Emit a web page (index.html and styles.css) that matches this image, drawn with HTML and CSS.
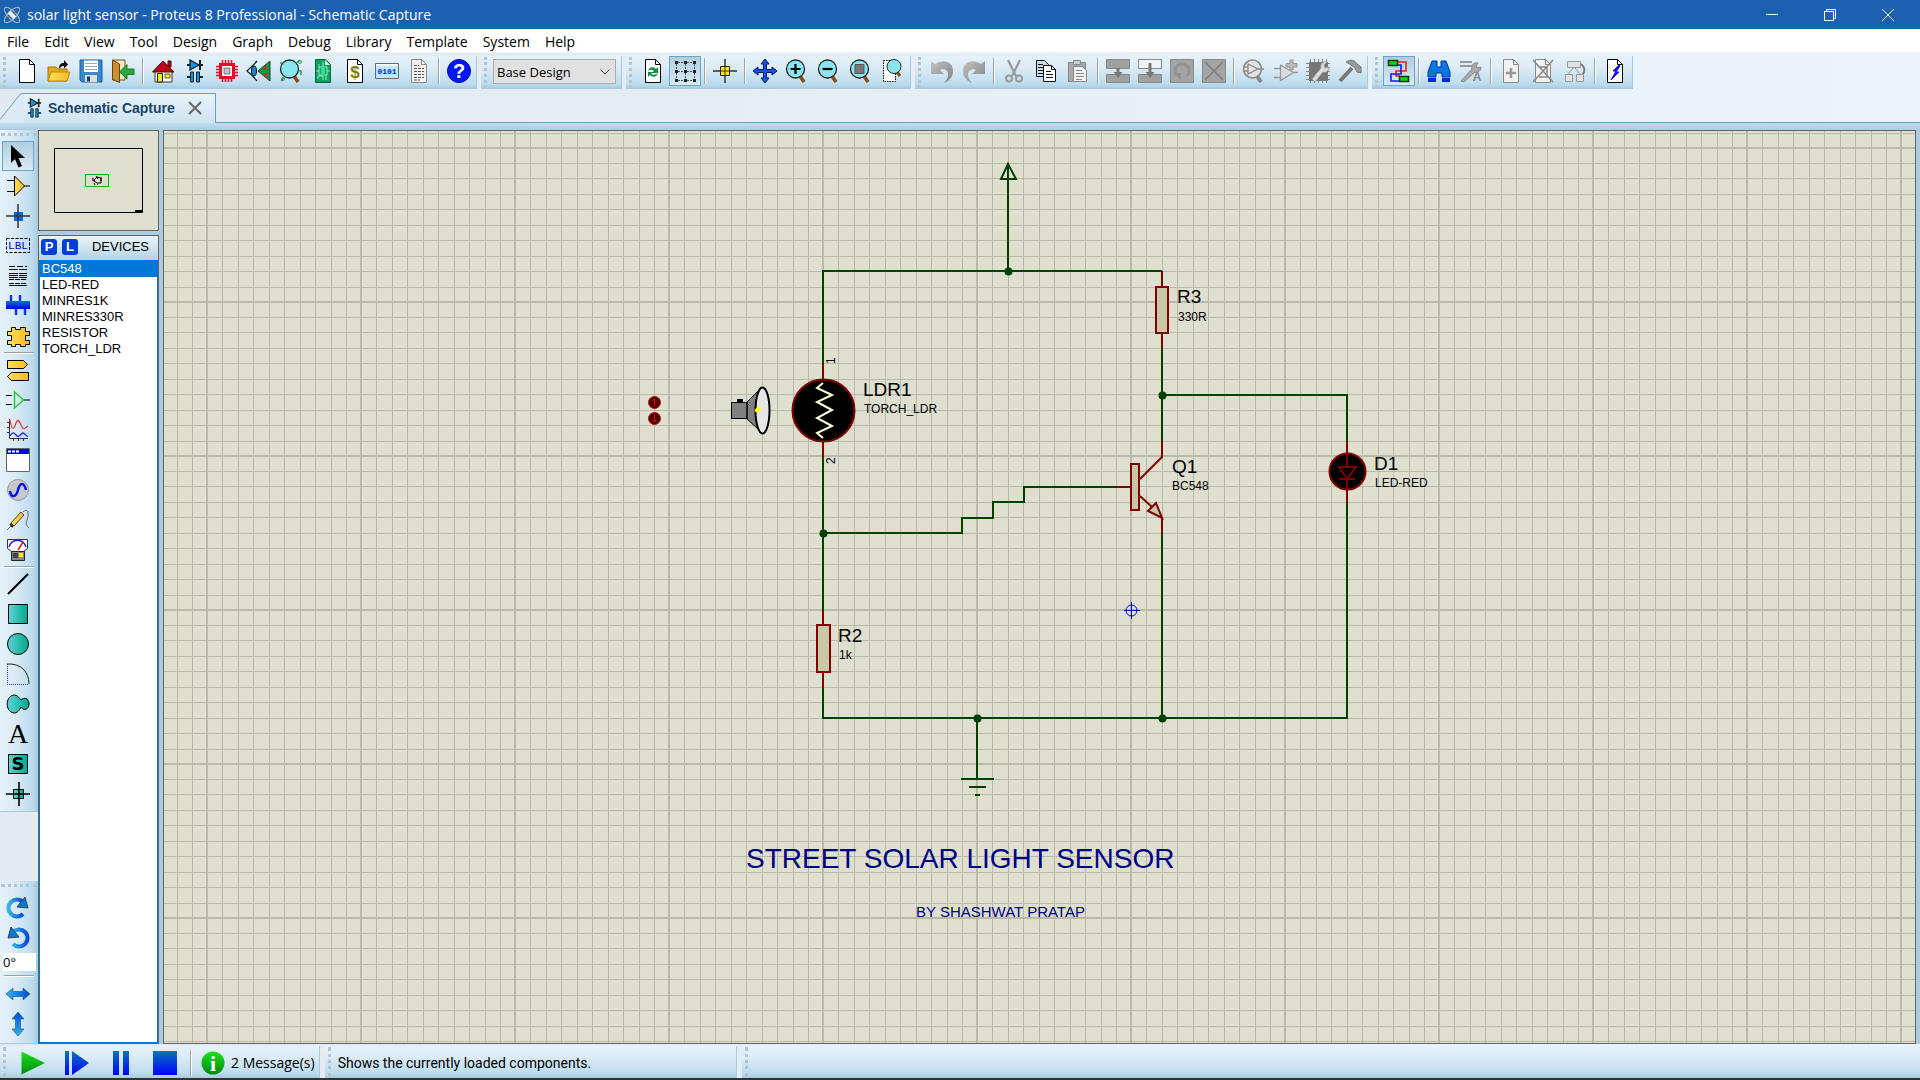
FILE: index.html
```html
<!DOCTYPE html>
<html lang="en">
<head>
<meta charset="utf-8">
<title>solar light sensor - Proteus 8 Professional - Schematic Capture</title>
<link rel="stylesheet" href="styles.css">
</head>
<body>
<svg class="defs" width="0" height="0" aria-hidden="true">
  <defs>
    <linearGradient id="gold" x1="0" x2="1"><stop offset="0" stop-color="#ffe05a"/><stop offset="1" stop-color="#fcb81e"/></linearGradient>
    <linearGradient id="teal" x1="0" x2="1"><stop offset="0" stop-color="#5fd3d8"/><stop offset="1" stop-color="#00a98c"/></linearGradient>
    <linearGradient id="blueV" x1="0" x2="0" y1="0" y2="1"><stop offset="0" stop-color="#0a74b8"/><stop offset="1" stop-color="#0000ff"/></linearGradient>
    <linearGradient id="blueH" x1="0" x2="1"><stop offset="0" stop-color="#35b5e5"/><stop offset="1" stop-color="#0048e0"/></linearGradient>
    <linearGradient id="blueT" x1="0" x2="0" y1="0" y2="1"><stop offset="0" stop-color="#0048e0"/><stop offset="1" stop-color="#35b5e5"/></linearGradient>
    <linearGradient id="greenV" x1="0" x2="0" y1="0" y2="1"><stop offset="0" stop-color="#1ee01e"/><stop offset="1" stop-color="#008a10"/></linearGradient>
    <linearGradient id="greyV" x1="0" x2="1" y1="0" y2="1"><stop offset="0" stop-color="#c2c2c2"/><stop offset="1" stop-color="#828282"/></linearGradient>
    <symbol id="page" viewBox="0 0 24 24"><path d="M4.500 .5h10l5 5v18h-15z" fill="#fff" stroke="#000"/><path d="M14.500 .5v5h5" fill="none" stroke="#000"/></symbol>
    <symbol id="page-grey" viewBox="0 0 24 24"><path d="M4.500 .5h10l5 5v18h-15z" fill="#f2f2f2" stroke="#888"/><path d="M14.500 .5v5h5" fill="none" stroke="#888"/></symbol>
    <symbol id="lens" viewBox="0 0 24 24"><path d="M15 17l4 6" stroke="#8a4a10" stroke-width="3.500"/><circle cx="10.500" cy="10" r="9" fill="#8ae6ee" stroke="#222" stroke-width="1.300"/></symbol>
    <symbol id="parts" viewBox="0 0 24 24"><g stroke="#122" stroke-width="2"><path d="M4 6h16M17 1v10M4 18h4M16 18h4"/><path d="M7 1l9 5-9 5z" fill="#1890e8" stroke-width="1.300"/></g><path d="M7.500 13h3v10h-3zM13.500 13h3v10h-3z" fill="#1890e8" stroke="#122"/></symbol>
    <symbol id="cross" viewBox="0 0 24 24"><path d="M12 0v24M0 12h24" stroke="#333" stroke-width="1.500"/></symbol>
    <pattern id="grid" width="154" height="154" patternUnits="userSpaceOnUse" x="42" y="16">
      <path d="M0 1h154M1 0v154" stroke="#b9b9aa" stroke-width="2"/>
      <path d="M16.500 0v154M32.500 0v154M47.500 0v154M63.500 0v154M78.500 0v154M94.500 0v154M109.500 0v154M125.500 0v154M140.500 0v154M0 16.500h154M0 31.500h154M0 47.500h154M0 62.500h154M0 78.500h154M0 93.500h154M0 109.500h154M0 124.500h154M0 140.500h154" stroke="#b9b9aa"/>
    </pattern>
  </defs>
</svg>

<header class="titlebar">
  <svg class="app-icon" viewBox="0 0 20 20" fill="none" stroke="#a9b9c9"><ellipse cx="10" cy="10" rx="10" ry="4" transform="rotate(45 10 10)"/><ellipse cx="10" cy="10" rx="10" ry="4" transform="rotate(-45 10 10)"/><path d="M4 7l12 7M4 14l12-8" stroke="#667"/><path d="M7 7l6 6" stroke="#eee" stroke-width="4"/></svg>
  <span class="app-title">solar light sensor - Proteus 8 Professional - Schematic Capture</span>
  <div class="window-buttons">
    <button aria-label="Minimize"><svg viewBox="0 0 12 12"><path d="M0 5.500h12"/></svg></button>
    <button aria-label="Restore"><svg viewBox="0 0 12 12"><path d="M.5 2.500h9v9h-9zM2.500 2V.5h9v9H10"/></svg></button>
    <button aria-label="Close window"><svg viewBox="0 0 12 12"><path d="M0 0l12 12M12 0L0 12"/></svg></button>
  </div>
</header>

<nav class="menubar">
  <a href="#">File</a><a href="#">Edit</a><a href="#">View</a><a href="#">Tool</a><a href="#">Design</a><a href="#">Graph</a><a href="#">Debug</a><a href="#">Library</a><a href="#">Template</a><a href="#">System</a><a href="#">Help</a>
</nav>

<div class="toolbar">
  <div class="band">
    <button aria-label="New"><svg viewBox="0 0 24 24"><use href="#page"/></svg></button>
    <button aria-label="Open"><svg viewBox="0 0 24 24"><path d="M1 8h8l2 2h9v12H1z" fill="#e8a818" stroke="#a87808"/><path d="M1 22l3-9h19l-3 9z" fill="url(#gold)" stroke="#b88810"/><path d="M12 10c0-5 2-6 5-6V1l4 4.500-4 4V7c-2 0-3 .5-5 3z" fill="#111"/></svg></button>
    <button aria-label="Save"><svg viewBox="0 0 24 24"><path d="M1 1h22v22H3l-2-2z" fill="#3b87c8" stroke="#14609c"/><path d="M5 1.500h14V13H5z" fill="#fff"/><path d="M6 4.500h12M6 7.500h12M6 10.500h12" stroke="#9ab"/><path d="M6 16h12v7H6z" fill="#ddd"/><path d="M8 17.500h3v5H8z" fill="#14406c"/></svg></button>
    <button aria-label="Close project"><svg viewBox="0 0 24 24"><path d="M1.500 1H14v20H1.500z" fill="#efe6c8" stroke="#7a5210"/><path d="M1.500 1l7 4v18.500l-7-3z" fill="#c89030" stroke="#6a4208"/><path d="M23 10h-7V5.500L8.500 13l7.500 7v-4.500h7z" fill="#2aa83a" stroke="#1b7a2a"/></svg></button>
    <span class="sep"></span>
    <button aria-label="Home"><svg viewBox="0 0 24 24"><path d="M4 12h17v11H4z" fill="#fffff0" stroke="#333"/><path d="M17 2h3v6h-3z" fill="#c00010" stroke="#400"/><path d="M1.500 13L12 2l11 11z" fill="#c00018" stroke="#500"/><path d="M6.500 14.500h5V23h-5z" fill="#f0e820" stroke="#222"/><path d="M14 15h5v4h-5z" fill="#fff000" stroke="#555"/></svg></button>
    <button aria-label="Schematic capture"><svg viewBox="0 0 24 24"><use href="#parts"/></svg></button>
    <button aria-label="PCB layout"><svg viewBox="0 0 24 24"><path d="M7.500 1v22M10.500 1v22M13.500 1v22M16.500 1v22M1 7.500h22M1 10.500h22M1 13.500h22M1 16.500h22" stroke="#e01028" stroke-width="1.600"/><path d="M4 4h16v16H4z" fill="#e01028"/><path d="M7 7h10v10H7z" fill="#fff"/><path d="M9 9h6v6H9z" fill="#b8c4d8" stroke="#333" stroke-width=".6"/></svg></button>
    <button aria-label="3D viewer"><svg viewBox="0 0 24 24"><path d="M10 2C7 6 3 9 0 12c4 3 7 6 10 10" fill="#dff" stroke="#222" stroke-width="1.300"/><ellipse cx="7" cy="12" rx="2.500" ry="5" fill="#2080d0" stroke="#111"/><path d="M11 12L23 2v20z" fill="#109848" stroke="#333"/><path d="M14 11l6-5v5zM15 14h6v4z" fill="#e02818"/></svg></button>
    <button aria-label="Gerber viewer"><svg viewBox="0 0 24 24"><use href="#lens"/><path d="M5 18L2 22M17 4l4-3M3 4H1M18 12h4v4" stroke="#20a060" fill="none" stroke-width="1.500"/><circle cx="21" cy="3" r="1.500" fill="none" stroke="#20a060"/><circle cx="4" cy="20" r="1.500" fill="none" stroke="#20a060"/></svg></button>
    <button aria-label="Design explorer"><svg viewBox="0 0 24 24"><path d="M4.500 .5h10l5 5v18h-15z" fill="#12a060" stroke="#064"/><path d="M14 1v5h5z" fill="#dff5ea"/><path d="M8 8h8v8H8zM8 5v3M12 3v5M7 20v-3h5v4M16 12h3M8 12H5M15 16v5" stroke="#8af0c0" fill="none"/><path d="M10 9h4v6h-4z" fill="#30d8a0"/></svg></button>
    <button aria-label="Bill of materials"><svg viewBox="0 0 24 24"><use href="#page"/><text x="12" y="19" text-anchor="middle" class="glyph-dollar">$</text></svg></button>
    <button aria-label="Source code"><svg viewBox="0 0 24 24"><path d="M.5 4.500h23v15H.5z" fill="#b8ecff" stroke="#667"/><path d="M1 5h22v2H1z" fill="#fff"/><text x="12" y="15" text-anchor="middle" class="glyph-bits">0101</text></svg></button>
    <button aria-label="Project notes"><svg viewBox="0 0 24 24"><use href="#page-grey"/><path d="M7 6.500h5M7 9.500h10M7 12.500h10M7 15.500h10M7 18.500h10M7 21h6" stroke="#555" stroke-dasharray="3 1"/></svg></button>
    <span class="sep"></span>
    <button aria-label="Help"><svg viewBox="0 0 24 24"><circle cx="12" cy="12" r="11.500" fill="#0018f8" stroke="#000a90"/><text x="12" y="19" text-anchor="middle" class="glyph-help">?</text></svg></button>
  </div>
  <div class="band">
    <label class="variant"><select aria-label="Design variant"><option>Base Design</option></select><svg viewBox="0 0 10 6"><path d="M.5 .5L5 5 9.500 .5" fill="none" stroke="#444"/></svg></label>
  </div>
  <div class="band">
    <button aria-label="Redraw"><svg viewBox="0 0 24 24"><use href="#page"/><path d="M7 12c1-4 5-5 8-2l2-2v6h-6l2-2c-2-2-4-1-6 0zM17 14c-1 4-5 5-8 2l-2 2v-5h5l-2 2c2 1 5 1 7-1z" fill="#0c9040"/></svg></button>
    <button class="on" aria-label="Toggle grid"><svg viewBox="0 0 24 24" fill="none" stroke="#556" stroke-dasharray="2 1"><path d="M2 3.500h20M2 12.500h20M2 21.500h20M3.500 2v20M12.500 2v20M21.500 2v20"/><path d="M2 3.500h22M2 12.500h22M2 21.500h22" stroke="#222" stroke-width="3" stroke-dasharray="3 6"/></svg></button>
    <span class="sep"></span>
    <button aria-label="False origin"><svg viewBox="0 0 24 24"><use href="#cross"/><path d="M7.500 7.500h9v9h-9z" fill="#ffe800" stroke="#222"/><path d="M12 7v10M7 12h10" stroke="#333"/></svg></button>
    <span class="sep"></span>
    <button aria-label="Center at cursor"><svg viewBox="0 0 24 24"><path d="M12 0l4 5h-2.500v5.500H19V8l5 4-5 4v-2.500h-5.500V19H16l-4 5-4-5h2.500v-5.500H5V16l-5-4 5-4v2.500h5.500V5H8z" fill="#0858f0" stroke="#001060"/></svg></button>
    <button aria-label="Zoom in"><svg viewBox="0 0 24 24"><use href="#lens"/><path d="M10.500 5v10M5.500 10h10" stroke="#000" stroke-width="2.200"/></svg></button>
    <button aria-label="Zoom out"><svg viewBox="0 0 24 24"><use href="#lens"/><path d="M5.500 10h10" stroke="#000" stroke-width="2.200"/></svg></button>
    <button aria-label="Zoom all"><svg viewBox="0 0 24 24"><use href="#lens"/><path d="M6 5.500h9v9H6z" fill="#777" stroke="#555"/></svg></button>
    <button aria-label="Zoom area"><svg viewBox="0 0 24 24"><path d="M2.500 1.500h12v21h-12z" fill="#fff" stroke="#000" stroke-dasharray="1.500 1"/><path d="M16 13l3 4" stroke="#8a4a10" stroke-width="3"/><circle cx="13" cy="7.500" r="7" fill="#8ae6ee" stroke="#222"/></svg></button>
  </div>
  <div class="band">
    <button aria-label="Undo"><svg viewBox="0 0 24 24"><path d="M1 2l4 3c9-6 18-2 18 7 0 6-4 10-9 12 4-4 5-9 3-12-2-2-5-2-7-1l4 4H1z" fill="url(#greyV)"/></svg></button>
    <button aria-label="Redo"><svg viewBox="0 0 24 24"><path d="M23 2l-4 3C10-1 1 3 1 12c0 6 4 10 9 12-4-4-5-9-3-12 2-2 5-2 7-1l-4 4h13z" fill="url(#greyV)"/></svg></button>
    <span class="sep"></span>
    <button aria-label="Cut"><svg viewBox="0 0 24 24" fill="none" stroke="#999"><path d="M6 1l8 16M18 1l-8 16" stroke-width="2.200"/><circle cx="7" cy="19.500" r="3" stroke-width="2"/><circle cx="17" cy="19.500" r="3" stroke-width="2"/></svg></button>
    <button aria-label="Copy"><svg viewBox="0 0 24 24" stroke="#111" fill="#fff"><path d="M2.500 1.500h8l4 4v12h-12z" fill="#c8dcec"/><path d="M4 5.500h5M4 8.500h5M4 11.500h5M4 14.500h5"/><path d="M9.500 6.500h8l4 4v12h-12z"/><path d="M17.500 6.500v4h4M12 12.500h5M12 15.500h7M12 18.500h7" fill="none"/></svg></button>
    <button aria-label="Paste"><svg viewBox="0 0 24 24" stroke="#888"><path d="M2.500 3.500h17v19h-17z" fill="#aaa"/><path d="M7.500 1.500h7v4h-7z" fill="#ccc"/><path d="M7.500 7.500h9l4 4v11h-13z" fill="#f2f2f2"/><path d="M10 11.500h6M10 14.500h8M10 17.500h8M10 20.500h6"/></svg></button>
    <span class="sep"></span>
    <button aria-label="Block copy"><svg viewBox="0 0 24 24"><path d="M.5 .5h23v9H.5zM.5 15.500h23v8H.5z" fill="#a0a0a0" stroke="#888"/><path d="M10.500 9h3v4h3L12 19l-4.500-6h3z" fill="#777"/></svg></button>
    <button aria-label="Block move"><svg viewBox="0 0 24 24"><path d="M.5 .5h23v9H.5z" fill="#eef3f6" stroke="#888"/><path d="M.5 15.500h23v8H.5z" fill="#a0a0a0" stroke="#888"/><path d="M10.500 4h3v9h3L12 19l-4.500-6h3z" fill="#777"/></svg></button>
    <button aria-label="Block rotate"><svg viewBox="0 0 24 24"><path d="M.5 .5h23v23H.5z" fill="#a4a4a4" stroke="#888"/><path d="M7 17a7 7 0 1 1 10 0" fill="none" stroke="#929292" stroke-width="3"/><path d="M3 14h8v7z" fill="#929292"/></svg></button>
    <button aria-label="Block delete"><svg viewBox="0 0 24 24"><path d="M.5 .5h23v23H.5z" fill="#a4a4a4" stroke="#888"/><path d="M3 3l18 18M21 3L3 21" stroke="#868686" stroke-width="2"/></svg></button>
    <span class="sep"></span>
    <button aria-label="Pick parts"><svg viewBox="0 0 24 24" stroke="#888" fill="#e4e4e4"><path d="M15 17l4 6" stroke-width="4"/><circle cx="10.500" cy="10" r="9" stroke-width="1.500"/><path d="M6 5l10 5-10 5zM1 8h5M1 12h5M16 10h6" stroke-width="1.300"/></svg></button>
    <button aria-label="Make device"><svg viewBox="0 0 24 24" stroke="#999" fill="#ddd"><path d="M6.500 6l13 7.500-13 8zM0 9.500h6M0 18.500h6M19 13.500h5" stroke-width="1.300"/><path d="M16 1h3v3.500h4V8h-4v3h-3V8h-4V4.500h4z" fill="#bbb"/></svg></button>
    <button aria-label="Packaging tool"><svg viewBox="0 0 24 24"><path d="M4.500 0v24M8.500 0v24M12.500 0v24M16.500 0v24M20.500 0v24M0 4.500h24M0 8.500h24M0 12.500h24M0 16.500h24M0 20.500h24" stroke="#888"/><path d="M3 3h19v19H3z" fill="#777"/><path d="M6 20l9-11c-1-4 2-7 6-6l-3 3 1 3 4-1c0 4-3 6-6 5L9 23z" fill="#ddd" stroke="#999"/></svg></button>
    <button aria-label="Decompose"><svg viewBox="0 0 24 24"><path d="M2 22L14 9" stroke="#777" stroke-width="4"/><path d="M8 3c5-3 9-2 11 2l4 3v6l-4-1-2-4-4-3z" fill="#999" stroke="#777"/></svg></button>
  </div>
  <div class="band">
    <button class="on" aria-label="Wire autorouter"><svg viewBox="0 0 24 24" fill="none" stroke-width="1.600"><path d="M11 3h8v9H9v5h4" stroke="#f02020"/><path d="M10 6h4v9H4v7h9" stroke="#1818e0"/><path d="M1.500 1.500h9v5h-9zM12.500 17.500h9v5h-9z" fill="#22cc22" stroke="#064006"/></svg></button>
    <span class="sep"></span>
    <button aria-label="Search"><svg viewBox="0 0 24 24"><path d="M5 2h5v6h4V2h5l4 11v5h-8v-4h-6v4H1v-5z" fill="#0878e0" stroke="#0030a0"/><path d="M1 19h8v4H1zM15 19h8v4h-8z" fill="#0028e8"/></svg></button>
    <button aria-label="Property assignment"><svg viewBox="0 0 24 24"><path d="M1 3h12M1 7h12" stroke="#999" stroke-width="2"/><path d="M2 22L13 10c-1-4 2-7 6-6l-2 3 1 2 4-1c0 4-3 6-6 5L5 23z" fill="#aaa" stroke="#888"/><text x="18" y="22" text-anchor="middle" class="glyph-a">A</text></svg></button>
    <span class="sep"></span>
    <button aria-label="New sheet"><svg viewBox="0 0 24 24"><use href="#page-grey"/><path d="M12 9v10M7 14h10" stroke="#999" stroke-width="2.500"/></svg></button>
    <button aria-label="Remove sheet"><svg viewBox="0 0 24 24"><use href="#page-grey"/><path d="M8 8h8v10H8M2 1l20 22M22 1L2 23" fill="none" stroke="#888" stroke-width="1.500"/></svg></button>
    <button aria-label="Exit to parent"><svg viewBox="0 0 24 24" fill="#e2e2e2" stroke="#999"><path d="M4.500 2.500h13v6h-13zM2.500 15.500h7v7h-7zM13.500 15.500h7v7h-7zM10 9l-5 6M12 9l5 6"/><path d="M18 5c4 3 4 7 2 10" fill="none" stroke-width="2" stroke="#777"/></svg></button>
    <span class="sep"></span>
    <button aria-label="Electrical check"><svg viewBox="0 0 24 24"><use href="#page"/><path d="M16 6l-6 6h3l-5 9 8-8h-3l4-6z" fill="#1010f0" stroke="#1010f0"/></svg></button>
  </div>
</div>

<div class="tabs">
  <svg class="tab-slant" viewBox="0 0 24 31"><path d="M0 26.500L20 1.500q1-1 4-1V31H0z" fill="#dcebf6"/><path d="M0 26.500L20 1.500q1-1 4-1" fill="none" stroke="#6ba0bd"/></svg>
  <div class="tab"><svg viewBox="3 0 18 24"><use href="#parts" width="24" height="24"/></svg><span>Schematic Capture</span>
    <button aria-label="Close tab"><svg viewBox="0 0 14 14"><path d="M1 1l12 12M13 1L1 13" stroke="#666" stroke-width="2"/></svg></button></div>
</div>
<div class="tab-strip"></div>

<main class="workspace">
  <div class="modes">
    <div class="vband">
      <button class="on" aria-label="Selection mode"><svg viewBox="0 0 24 24"><path d="M5 1v18l4-4 3.500 8.500 3.500-1.500-3.500-8H19z" fill="#000"/></svg></button>
      <button aria-label="Component mode"><svg viewBox="0 0 24 24"><path d="M1 6.500h7M1 17.500h7M18 12h6" stroke="#000"/><path d="M8.500 2v20l10-10z" fill="url(#gold)" stroke="#000"/></svg></button>
      <button aria-label="Junction mode"><svg viewBox="0 0 24 24"><path d="M8 8h9v9H8z" fill="#0868e0"/><use href="#cross"/></svg></button>
      <button aria-label="Label mode"><svg viewBox="0 0 24 24"><path d="M.5 4.500h23v14H.5z" fill="none" stroke="#000" stroke-dasharray="3 1.500"/><text x="12" y="15" text-anchor="middle" class="glyph-lbl">LBL</text></svg></button>
      <button aria-label="Text script mode"><svg viewBox="0 0 24 24" stroke="#000"><path d="M3 2.500h18" stroke-dasharray="6 2"/><path d="M3 5.500h18M3 9.500h18M3 11.500h18M3 13.500h18" stroke-dasharray="9 1"/><path d="M3 15.500h18M3 19.500h18" stroke-dasharray="5 1"/><path d="M3 21.500h18"/></svg></button>
      <button aria-label="Bus mode"><svg viewBox="0 0 24 24"><path d="M5 1v8M14 1v8M10 13v8M19 13v8" stroke="#0838e8" stroke-width="2.400"/><path d="M0 7h24v8H0z" fill="url(#blueV)"/></svg></button>
      <button aria-label="Subcircuit mode"><svg viewBox="0 0 24 24"><path d="M5.500 3.500h4v2h5v-2h5v4h4v4h-4v5h4v4h-4v2h-5v-2h-5v2h-4v-2h-4v-4h4v-5h-4v-4h4z" fill="url(#gold)" stroke="#000"/></svg></button>
      <span class="hsep"></span>
      <button aria-label="Terminals mode"><svg viewBox="0 0 24 24" fill="url(#gold)" stroke="#000"><path d="M1.500 2.500h16l4 4-4 4h-16zM22.500 14.500h-17l-4 4 4 4h17z"/></svg></button>
      <button aria-label="Device pins mode"><svg viewBox="0 0 24 24" fill="none"><path d="M0 7.500h6M0 16.500h6M18 12h6" stroke="#000"/><path d="M8.500 4v16l9-8z" stroke="#18c828" stroke-width="1.300"/></svg></button>
      <button aria-label="Graph mode"><svg viewBox="0 0 24 24" fill="none"><path d="M3.500 1v19.500H22M1 4.500h2M1 9.500h2M1 14.500h2M7.500 20v3M12.500 20v3M17.500 20v3" stroke="#333"/><path d="M4 2c2 12 4 9 6 3s4 0 6 4 4 0 6-1" stroke="#e83030" stroke-width="1.200"/><path d="M4 18c3-6 5-2 7 0s4-3 6-3 3 4 5 3" stroke="#2020f0" stroke-width="1.300"/></svg></button>
      <button aria-label="Active popup mode"><svg viewBox="0 0 24 24"><path d="M.5 .5h23v23H.5z" fill="#fff" stroke="#666"/><path d="M1 1h22v5H1z" fill="#0000e8"/><path d="M2 3.500h11" stroke="#fff" stroke-width="2" stroke-dasharray="3 1"/></svg></button>
      <button aria-label="Generator mode"><svg viewBox="0 0 24 24"><circle cx="12" cy="12" r="10.500" fill="#c9c9cd" stroke="#999"/><path d="M4 13c1 7 6 7 8-1s6-8 8 0" fill="none" stroke="#0010f0" stroke-width="2.500"/></svg></button>
      <button aria-label="Probe mode"><svg viewBox="0 0 24 24"><path d="M1 22l5-5M17 4c6-5 6 3 4 8s0 6 2 8" fill="none" stroke="#667"/><path d="M5 15L15 4l3 3L8 18z" fill="url(#gold)" stroke="#444"/><path d="M4 16l3 3" stroke="#222" stroke-width="2"/></svg></button>
      <button aria-label="Instruments mode"><svg viewBox="0 0 24 24"><path d="M1.500 1.500h20v9l-4 3h-12l-4-3z" fill="#fff" stroke="#333"/><path d="M3 9c3-9 14-9 17 0" fill="none" stroke="#2020f0" stroke-width="1.400"/><path d="M12 12l5-8" stroke="#e02020" stroke-width="1.600"/><path d="M5.500 13.500h13v9h-13z" fill="#888" stroke="#222"/><path d="M13 15h4v4h-4z" fill="#ffe800"/><path d="M7 15h5v5H7z" fill="#444"/></svg></button>
      <span class="hsep"></span>
      <button aria-label="Line"><svg viewBox="0 0 24 24"><path d="M2 22L22 2" stroke="#000" stroke-width="2"/></svg></button>
      <button aria-label="Box"><svg viewBox="0 0 24 24"><path d="M2.500 2.500h19v19h-19z" fill="url(#teal)" stroke="#000"/></svg></button>
      <button aria-label="Circle"><svg viewBox="0 0 24 24"><circle cx="12" cy="12" r="10.500" fill="url(#teal)" stroke="#000"/></svg></button>
      <button aria-label="Arc"><svg viewBox="0 0 24 24" fill="none"><path d="M1.500 2v20.500H23" stroke="#2030e0" stroke-dasharray="1 1"/><path d="M1 2c14-1 22 8 22 20" stroke="#222"/></svg></button>
      <button aria-label="Path"><svg viewBox="0 0 24 24"><path d="M8 3c4 0 5 3 7 5 3-3 8-2 8 4s-6 7-8 3c-2 4-4 6-7 6-9-1-9-17 0-18z" fill="url(#teal)" stroke="#000"/></svg></button>
      <button aria-label="Text"><svg viewBox="0 0 24 24"><text x="12" y="21" text-anchor="middle" class="glyph-text">A</text></svg></button>
      <button aria-label="Symbol"><svg viewBox="0 0 24 24"><path d="M2.500 2.500h19v19h-19z" fill="url(#teal)" stroke="#000"/><text x="12" y="18" text-anchor="middle" class="glyph-s">S</text></svg></button>
      <button aria-label="Marker"><svg viewBox="0 0 24 24"><path d="M7.500 7.500h10v9h-10z" fill="url(#teal)" stroke="#000"/><path d="M13 0v24M0 12h24" stroke="#000" stroke-width="1.600"/></svg></button>
    </div>
    <div class="vband rotate">
      <button aria-label="Rotate clockwise"><svg viewBox="0 0 24 24"><path d="M17 18a8.500 8.500 0 1 1 0-12" fill="none" stroke="url(#blueH)" stroke-width="4"/><path d="M19 1l3 11-11-1z" fill="#0878d8" stroke="#345"/></svg></button>
      <button aria-label="Rotate anticlockwise"><svg viewBox="0 0 24 24"><path d="M7 18a8.500 8.500 0 1 0 0-12" fill="none" stroke="url(#blueH)" stroke-width="4"/><path d="M5 1L2 12l11-1z" fill="#0878d8" stroke="#345"/></svg></button>
      <input type="text" value="0°" aria-label="Rotation angle">
      <span class="hsep"></span>
      <button aria-label="Mirror horizontally"><svg viewBox="0 0 24 24"><path d="M0 12l7-6v3.500h10V6l7 6-7 6v-3.500H7V18z" fill="url(#blueH)" stroke="#268" stroke-width=".7"/></svg></button>
      <button aria-label="Mirror vertically"><svg viewBox="0 0 24 24"><path d="M12 0l6 7h-3.500v10H18l-6 7-6-7h3.500V7H6z" fill="url(#blueT)" stroke="#268" stroke-width=".7"/></svg></button>
    </div>
  </div>

  <aside class="side">
    <div class="overview">
      <svg viewBox="0 0 119 99"><path d="M15.500 17.500h88v64h-88z" fill="none" stroke="#000"/><path d="M96 79h7v2h-7z" fill="#000"/><path d="M46.500 43.500h23v12h-23z" fill="none" stroke="#00b800"/><path d="M53 47l3 2-2 1 4-4 4 1v5h-4l-3-2M57 45l2 3M55 52l1 2M58 53l1 1M62 46v4M54 49h-1" fill="none" stroke="#000"/></svg>
    </div>
    <section class="devices">
      <div class="devices-head"><button>P</button><button>L</button><h2>DEVICES</h2></div>
      <ul>
        <li class="selected">BC548</li><li>LED-RED</li><li>MINRES1K</li><li>MINRES330R</li><li>RESISTOR</li><li>TORCH_LDR</li>
      </ul>
    </section>
  </aside>

  <div class="canvas">
    <svg class="schematic">
      <rect width="100%" height="100%" fill="url(#grid)"/>
      <g transform="translate(-164 -131)">
        <g class="wire">
          <path d="M1008 163v108M823 364v-93h339M823 457v153M823 533h139v-15h31v-16h31v-15h92M1162 349v92M1162 395h185v46M1162 534v184M1347 503v215H823v-30M977 718v61"/>
          <path d="M1008 164l-7 15h15zM961 779h33M969 787h17M975 795h5"/>
        </g>
        <g class="junction"><circle cx="1008.500" cy="271.500" r="4"/><circle cx="823.500" cy="533.500" r="4"/><circle cx="1162.500" cy="395.500" r="4"/><circle cx="977.500" cy="718.500" r="4"/><circle cx="1162.500" cy="718.500" r="4"/></g>
        <g class="part">
          <path d="M1162 271v16M1162 333v16M823 610v15M823 672v16M823 364v16M823 441v16M1116 487h15M1140 479l22-22v-16M1140 496l12 11M1162 517v17"/>
          <path class="body" d="M1156 287h12v46h-12zM817 625h13v47h-13zM1131 464h8v46h-8zM1156 503l-8 8 14 7z"/>
          <circle class="dark" cx="823.500" cy="410.500" r="31"/>
          <path d="M1347 441v62"/>
          <circle class="dark" cx="1347.500" cy="471.500" r="18"/>
          <path d="M1347 441v26M1347 479v24M1339 467h17l-9 12zM1339 479h16"/>
        </g>
        <path d="M823 383l-6 5 15 7-15 7 15 8-15 8 15 8-15 7 6 5" fill="none" stroke="#ffffd8" stroke-width="2"/>
        <path d="M737 399h6v3h-6z"/>
        <path d="M731.500 402.500H747v16h-15.500zM747 402l11-11v38l-11-10z" fill="#808080" stroke="#000"/>
        <ellipse cx="762.500" cy="410.500" rx="7" ry="23" fill="#e6e6e6" stroke="#000" stroke-width="2"/>
        <path d="M755 410l2-2h3l1 2-2 1-3 1z" fill="#ff0" stroke="#ff0"/>
        <g class="knob"><circle cx="654.500" cy="402.500" r="6"/><circle cx="654.500" cy="418.500" r="6"/><path d="M654.500 406v-7M652 401.500l2.500-2.500 2.500 2.500M654.500 415v7M652 419.500l2.500 2.500 2.500-2.500"/></g>
        <g fill="none" stroke="#0000c8"><circle cx="1131.500" cy="610.500" r="5.500"/><path d="M1131.500 602v17M1124 610.500h16"/></g>
        <g class="ref">
          <text x="1177" y="303">R3</text><text x="863" y="396">LDR1</text><text x="1172" y="473">Q1</text><text x="1374" y="470">D1</text><text x="838" y="642">R2</text>
        </g>
        <g class="value">
          <text x="1178" y="321">330R</text><text x="864" y="413">TORCH_LDR</text><text x="1172" y="490">BC548</text><text x="1375" y="487">LED-RED</text><text x="839" y="659">1k</text>
          <text transform="translate(835 364) rotate(-90)">1</text><text transform="translate(835 464) rotate(-90)">2</text>
        </g>
        <text class="heading" x="746" y="868">STREET SOLAR LIGHT SENSOR</text>
        <text class="byline" x="916" y="917">BY SHASHWAT PRATAP</text>
      </g>
    </svg>
  </div>
</main>

<footer class="statusbar">
  <div class="sband">
    <div class="sim">
      <button aria-label="Run"><svg viewBox="0 0 24 24"><path d="M.5 .5L24 12 .5 23.500z" fill="url(#greenV)"/></svg></button>
      <button aria-label="Step"><svg viewBox="0 0 24 24"><path d="M0 0h4v24H0zM7 0l17 12L7 24z" fill="url(#blueV)"/></svg></button>
      <button aria-label="Pause"><svg viewBox="0 0 24 24"><path d="M4 0h6v24H4zM14 0h6v24h-6z" fill="url(#blueV)"/></svg></button>
      <button aria-label="Stop"><svg viewBox="0 0 24 24"><path d="M0 0h24v24H0z" fill="url(#blueV)"/></svg></button>
    </div>
    <span class="sep"></span>
    <svg class="info" viewBox="0 0 24 24"><circle cx="12" cy="12" r="11.500" fill="url(#greenV)"/><text x="12" y="20" text-anchor="middle" class="glyph-i">i</text></svg>
    <span>2 Message(s)</span>
  </div>
  <div class="sband hint"><span>Shows the currently loaded components.</span></div>
  <div class="sband rest"></div>
</footer>
</body>
</html>
```

FILE: styles.css
```css
* { box-sizing: border-box; }

body {
  margin: 0;
  height: 100vh;
  display: flex;
  flex-direction: column;
  overflow: hidden;
  background: linear-gradient(90deg, #e2e9f0, #ebf3fb);
  font: 14px/20px "Open Sans", "Noto Sans", sans-serif;
  color: #000;
}

button {
  padding: 0;
  border: 1px solid transparent;
  background: none;
  display: flex;
  align-items: center;
  justify-content: center;
}
button svg { overflow: visible; }

.defs { position: absolute; }

/* Title bar and menu */
.titlebar {
  flex: none;
  display: flex;
  align-items: center;
  height: 29px;
  padding: 0 3px 0 2px;
  background: #1b61af;
  color: #fff;
}
.app-icon { width: 20px; height: 20px; margin-right: 5px; }
.window-buttons { display: flex; margin-left: auto; }
.window-buttons button { width: 58px; height: 29px; }
.window-buttons svg { width: 12px; height: 12px; fill: none; stroke: #fff; }

.menubar {
  flex: none;
  display: flex;
  gap: 15px;
  height: 23px;
  padding: 3px 7px 0;
  background: #fff;
}
.menubar a { color: #000; text-decoration: none; }

/* Toolbars */
.toolbar {
  flex: none;
  display: flex;
  gap: 4px;
  height: 41px;
  padding: 3px 0 4px;
  border-top: 1px solid #f0f0f0;
}
.band, .sband {
  position: relative;
  display: flex;
  align-items: flex-start;
  padding: 0 2px 0 11px;
  border-right: 1px solid #a6cbe0;
  background: linear-gradient(#e4f2f9, #dcebf5 35%, #bcdcee 85%, #a8c8dc);
}
.band { padding-right: 1px; }
.band::before, .sband::before {
  content: "";
  position: absolute;
  left: 3px;
  top: 1px;
  bottom: 1px;
  border-left: 3px dotted #b4c4d0;
}
.band button { width: 32px; height: 30px; }
.band button svg { width: 24px; height: 24px; }
.band button.on, .vband button.on {
  border-color: #6ba4c4;
  background: linear-gradient(#b0cede, #d8eaf4);
}
.sep {
  width: 2px;
  height: 26px;
  margin: 2px 3px;
  border-left: 1px solid #a0a0a0;
  border-right: 1px solid #fff;
}
.variant { position: relative; margin: 3px 4px 0 1px; }
.variant select {
  appearance: none;
  width: 123px;
  height: 25px;
  padding: 0 3px;
  border: 1px solid #adadad;
  border-radius: 0;
  background: #e1e1e1;
  font: inherit;
  font-size: 13px;
  color: #000;
}
.variant svg { position: absolute; right: 6px; top: 10px; width: 10px; height: 6px; }

.glyph-dollar, .glyph-help, .glyph-a { font-family: "Liberation Sans", sans-serif; font-weight: bold; }
.glyph-dollar { font-size: 17px; fill: #808000; }
.glyph-help { font-size: 20px; fill: #fff; }
.glyph-a { font-size: 12px; fill: #888; }
.glyph-i { font: bold 22px "Liberation Serif", serif; fill: #fff; }
.glyph-bits { font: bold 8px "Liberation Mono", monospace; fill: #1010e0; }
.glyph-lbl { font: 11px "Liberation Mono", monospace; fill: #0000d0; }
.glyph-text { font: 28px "Liberation Serif", serif; }
.glyph-s { font: bold 18px "DejaVu Sans", sans-serif; }

/* Document tabs */
.tabs { flex: none; display: flex; height: 30px; border-bottom: 1px solid #6ba0bd; }
.tab-slant { width: 24px; height: 31px; }
.tab {
  display: flex;
  align-items: center;
  height: 30px;
  padding: 0 12px 2px 2px;
  border: 1px solid #6ba0bd;
  border-width: 1px 1px 0 0;
  background: linear-gradient(#e6f3fa, #cfe4f1);
  font: bold 14px/20px "Liberation Sans", sans-serif;
  color: #1c4468;
}
.tab > svg { width: 17px; height: 20px; margin-right: 5px; }
.tab button { margin-left: 12px; }
.tab button svg { width: 14px; height: 14px; }
.tab-strip { flex: none; height: 7px; background: linear-gradient(#bedff0, #aecde0); }

/* Workspace */
.workspace { flex: 1; min-height: 0; display: flex; padding-right: 4px; background: #adcade; }
.modes {
  width: 38px;
  display: flex;
  flex-direction: column;
  justify-content: space-between;
  background: #e3eaf1;
}
.vband {
  position: relative;
  padding: 11px 4px 2px 2px;
  border-bottom: 1px solid #a6cbe0;
  background: linear-gradient(90deg, #e4f2f9, #dcebf5 35%, #bcdcee 85%, #a8c8dc);
}
.vband::before {
  content: "";
  position: absolute;
  top: 3px;
  left: 1px;
  right: 1px;
  border-top: 3px dotted #b4c4d0;
}
.vband button { width: 32px; height: 30px; }
.vband button svg { width: 24px; height: 24px; }
.hsep {
  display: block;
  height: 2px;
  margin: 1px 0 1px 2px;
  border-top: 1px solid #a0a0a0;
  border-bottom: 1px solid #fff;
}
.rotate { padding: 12px 4px 4px 2px; }
.rotate .hsep { margin: 4px 0 2px 2px; }
.rotate input {
  display: block;
  width: 33px;
  height: 18px;
  margin-left: 1px;
  padding: 0;
  border: 0;
  background: #fff;
  font: inherit;
  font-size: 13px;
  line-height: 18px;
}

.side { width: 121px; margin-right: 4px; display: flex; flex-direction: column; gap: 4px; }
.overview { height: 101px; border: 1px solid #646464; background: #dfdfd0; }
.overview svg { display: block; width: 119px; height: 99px; }
.devices {
  flex: 1;
  display: flex;
  flex-direction: column;
  border: 1px solid #646464;
  font: 13px/16px "Liberation Sans", sans-serif;
}
.devices-head {
  display: flex;
  align-items: center;
  gap: 5px;
  height: 24px;
  padding: 0 9px 2px 2px;
  background: linear-gradient(#eaf4fa, #b4d4e6);
}
.devices-head button {
  width: 16px;
  height: 16px;
  border: 0;
  border-radius: 3px;
  background: #0040d8;
  font: bold 13px/16px "Liberation Sans", sans-serif;
  color: #fff;
}
.devices-head h2 { margin: 0 0 0 auto; font: inherit; }
.devices ul {
  flex: 1;
  margin: 0;
  padding: 0;
  list-style: none;
  border: 1px solid #0078d7;
  border-top: 0;
  background: #fff;
}
.devices li { padding-left: 2px; }
.devices li.selected { background: #0078d7; color: #fff; padding-top: 1px; }

/* Schematic sheet */
.canvas { flex: 1; min-width: 0; border: 1px solid #646464; background: #dfdfd0; }
.schematic { display: block; width: 100%; height: 100%; font-family: "Liberation Sans", sans-serif; }
.wire { fill: none; stroke: #004000; stroke-width: 2; }
.junction { fill: #004000; }
.part { fill: none; stroke: #800000; stroke-width: 2; }
.part .body { fill: #c8c8a8; }
.part .dark { fill: #000; }
.knob { fill: #400000; stroke: #e00000; }
.ref { font-size: 19px; }
.value { font-size: 12px; }
.heading { font-size: 28px; fill: #000084; }
.byline { font-size: 15px; fill: #000084; }

/* Status bar */
.statusbar {
  flex: none;
  display: flex;
  gap: 5px;
  height: 36px;
  padding: 2px 0 0;
  border-bottom: 2px solid #2e3438;
}
.sband { align-items: center; padding: 2px 4px 0 12px; }
.sband .sep { margin: 0 9px 0 13px; }
.sim { display: flex; gap: 20px; padding-left: 9px; }
.sim svg, .info { width: 24px; height: 24px; }
.sim button { border: 0; }
.info { margin-right: 6px; }
.hint { width: 412px; padding-left: 13px; font-family: Roboto, sans-serif; }
.rest { flex: 1; border-right: 0; }
```
